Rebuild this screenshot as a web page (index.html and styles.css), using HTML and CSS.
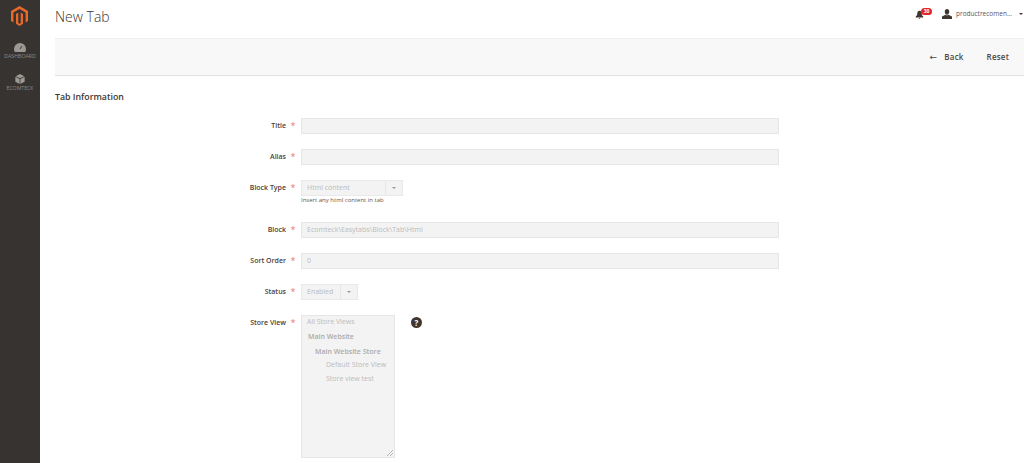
FILE: index.html
```html
<!DOCTYPE html>
<html lang="en">
<head>
<meta charset="utf-8">
<title>New Tab</title>
<link rel="stylesheet" href="styles.css">
</head>
<body>
<div class="app">
  <nav class="sidebar">
    <svg class="logo" viewBox="0 0 24 28" width="17" height="20"><path fill="#e8692a" d="M12 0 0 7v14l3.4 2V9l8.6-5 8.6 5v14l3.4-2V7z"/><path fill="#e8692a" d="M13.7 24 12 25l-1.7-1V9L7 11v14l5 3 5-3V11l-3.300-2z"/></svg>
    <div class="nav-item nav-first">
      <svg viewBox="0 0 16 12" width="12" height="9"><path fill="#9c9894" d="M8 0a8 8 0 0 0-8 8c0 1.500.4 2.800 1 4h14c.6-1.200 1-2.500 1-4a8 8 0 0 0-8-8z"/><path stroke="#373330" stroke-width="1.200" d="m8 8 2.500-4"/></svg>
      <span>DASHBOARD</span>
    </div>
    <div class="nav-item">
      <svg viewBox="0 0 14 14" width="10" height="10"><path fill="#9c9894" d="m7 0 6 3-6 3-6-3zM0.500 4l6 3v7l-6-3zM13.500 4l-6 3v7l6-3z"/></svg>
      <span>ECOMTECK</span>
    </div>
  </nav>
  <main class="content">
    <header class="topbar">
      <h1 class="page-title">New Tab</h1>
      <div class="top-actions">
        <div class="bell">
          <svg viewBox="0 0 12 12" width="9" height="9"><path fill="#41362f" d="M6 1C3.800 1 3 2.800 3 5c0 2-1 3-2 3.500V10h10V8.500C10 8 9 7 9 5c0-2.200-.8-4-3-4zM4.800 10.500h2.400L6 12z"/></svg>
          <span class="badge">30</span>
        </div>
        <div class="user">
          <svg viewBox="0 0 12 12" width="10" height="10"><path fill="#41362f" d="M6 0c1.700 0 2.700 1.200 2.700 3S7.700 7 6 7 3.300 4.800 3.300 3 4.300 0 6 0zM4.200 6.800 0 9v3h12V9L7.800 6.800C7.300 7.300 6.700 7.600 6 7.600s-1.300-.3-1.800-.8z"/></svg>
          <span>productrecomen...</span>
          <i class="caret"></i>
        </div>
      </div>
    </header>
    <div class="action-bar">
      <span class="action back"><span class="arrow">←</span>Back</span>
      <span class="action">Reset</span>
    </div>
    <h2 class="section-title">Tab Information</h2>
    <form class="form">
      <div class="row"><label class="label">Title</label><span class="star">*</span><div class="input"></div></div>
      <div class="row"><label class="label">Alias</label><span class="star">*</span><div class="input"></div></div>
      <div class="row row-note">
        <label class="label label-select">Block Type</label><span class="star">*</span>
        <div>
          <div class="select select-type"><span class="select-text">Html content</span><span class="select-btn"><i class="caret caret-light"></i></span></div>
          <div class="note">Insert any html content in tab</div>
        </div>
      </div>
      <div class="row"><label class="label">Block</label><span class="star">*</span><div class="input">Ecomteck\Easytabs\Block\Tab\Html</div></div>
      <div class="row"><label class="label">Sort Order</label><span class="star">*</span><div class="input">0</div></div>
      <div class="row"><label class="label">Status</label><span class="star">*</span><div class="select select-status"><span class="select-text">Enabled</span><span class="select-btn"><i class="caret caret-light"></i></span></div></div>
      <div class="row">
        <label class="label">Store View</label><span class="star">*</span>
        <div class="multi">
          <div class="opt">All Store Views</div>
          <div class="opt group">Main Website</div>
          <div class="opt group indent1">Main Website Store</div>
          <div class="opt indent2">Default Store View</div>
          <div class="opt indent2">Store view test</div>
          <svg class="grip" viewBox="0 0 6 6" width="6" height="6"><path stroke="#999" stroke-width=".7" d="M6 0 0 6M6 3 3 6"/></svg>
        </div>
        <span class="help">?</span>
      </div>
    </form>
  </main>
</div>
</body>
</html>
```
FILE: styles.css
```css
* { box-sizing: border-box; }
html, body { margin: 0; height: 463px; overflow: hidden; background: #fff; }
body { font-family: "Open Sans", sans-serif; color: #41362f; }
.app { display: flex; height: 463px; }
.sidebar { width: 40px; flex: none; background: #373330; display: flex; flex-direction: column; align-items: center; padding-top: 6px; }
.logo { display: block; margin-left: -1px; }
.nav-item { display: flex; flex-direction: column; align-items: center; color: #8f8b87; font-size: 5.200px; line-height: 7px; height: 31px; gap: 1px; }
.nav-item svg { display: block; }
.nav-first { margin-top: 17px; }
.content { flex: 1; min-width: 0; padding-left: 15px; }
.topbar { height: 38px; display: flex; justify-content: space-between; }
.page-title { margin: 0; padding-top: 6px; font-size: 14px; line-height: 21px; font-weight: 300; color: #41362f; }
.top-actions { display: flex; align-items: flex-start; padding-top: 8px; }
.bell { display: flex; width: 22px; margin-right: 5px; padding-top: 2px; position: relative; }
.badge { position: absolute; left: 6px; top: 0; background: #e22626; color: #fff; border-radius: 4px; font-size: 5px; font-weight: 700; line-height: 7px; width: 11px; text-align: center; }
.user { display: flex; align-items: center; font-size: 6.500px; line-height: 12px; color: #5a5560; width: 82px; }
.user svg { margin-right: 4px; }
.caret { display: inline-block; margin-left: 7px; border: 2px solid transparent; border-top: 2.500px solid #41362f; border-bottom: 0; }
.action-bar { height: 38px; padding-bottom: 2px; background: #f8f8f8; border-top: 1px solid #eee; border-bottom: 1px solid #e3e3e3; display: flex; justify-content: flex-end; align-items: center; gap: 23px; padding-right: 15px; font-size: 8px; font-weight: 600; letter-spacing: .2px; color: #514943; }
.arrow { margin-right: 7px; font-family: "DejaVu Sans", sans-serif; font-size: 9px; font-weight: 400; }
.section-title { margin: 15px 0 0; font-size: 8.800px; line-height: 13px; font-weight: 600; color: #41362f; }
.form { margin-top: 14px; display: flex; flex-direction: column; gap: 15px; }
.row { display: flex; align-items: flex-start; }
.row-note { margin-bottom: 3px; }
.label { width: 231px; flex: none; text-align: right; font-size: 7px; font-weight: 600; line-height: 16px; color: #4b413a; }
.star { width: 15px; flex: none; text-align: center; font-size: 9px; line-height: 16px; padding-right: 1px; color: #e22626; opacity: .65; }
.input { width: 478px; height: 16px; background: #f3f3f3; border: 1px solid #e6e6e6; padding-left: 5px; font-size: 7px; line-height: 14px; color: #bbb; }
.select { height: 16px; display: flex; background: #f3f3f3; border: 1px solid #e9e9e9; font-size: 7px; line-height: 13px; color: #bbb; }
.select-type { width: 102px; }
.select-status { width: 57px; }
.select-text { flex: 1; padding-left: 5px; }
.select-btn { width: 17px; border-left: 1px solid #e6e6e6; display: flex; align-items: center; justify-content: center; }
.caret-light { margin: 0; border-top-color: #999; }
.note { margin-top: 0; font-size: 6px; line-height: 8px; color: #5f5750; }
.multi { width: 94px; height: 143px; background: #f3f3f3; border: 1px solid #e6e6e6; padding: 0 0 0 5px; font-size: 7px; color: #bbb; position: relative; }
.opt { line-height: 12px; height: 14px; }
.opt.group { font-weight: 600; color: #aaa; font-size: 7px; line-height: 14px; height: 14.500px; margin-left: 1px; }
.indent1 { padding-left: 7px; }
.indent2 { padding-left: 19px; }
.grip { position: absolute; right: 1px; bottom: 1px; }
.help { margin: 2px 0 0 16px; width: 11px; height: 11px; border-radius: 50%; background: #41362f; color: #fff; font-size: 8px; font-weight: 700; line-height: 11px; text-align: center; }
```
